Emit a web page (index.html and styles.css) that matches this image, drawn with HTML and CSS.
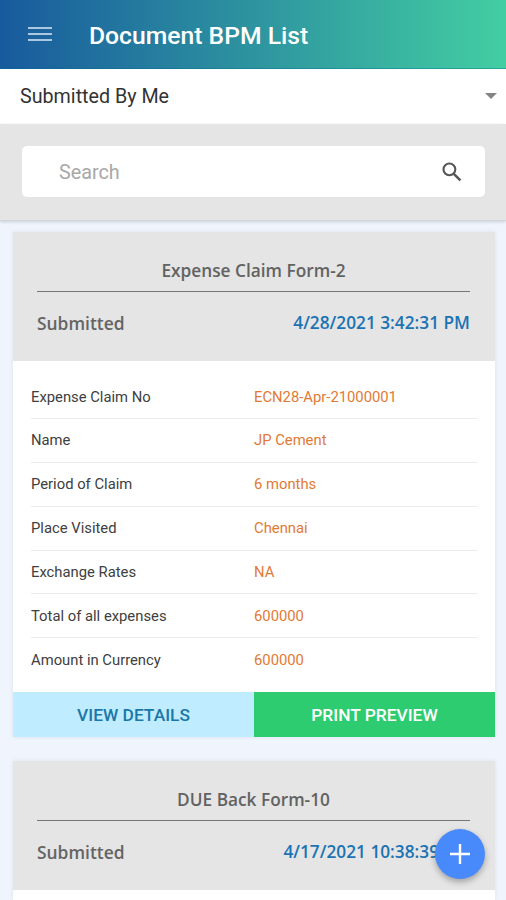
FILE: index.html
```html
<!DOCTYPE html>
<html lang="en">
<head>
<meta charset="utf-8">
<title>Document BPM List</title>
<link rel="stylesheet" href="styles.css">
</head>
<body>
<header class="topbar">
  <svg class="menu" width="24" height="16" viewBox="0 0 24 16"><path d="M0 2h24M0 8h24M0 14h24" stroke="currentColor" stroke-width="2"/></svg>
  <h1 class="title">Document BPM List</h1>
</header>
<div class="filter">
  <span class="filter-text">Submitted By Me</span>
  <svg class="caret" width="12" height="6" viewBox="0 0 12 6"><path d="M0 0h12L6 6z" fill="#858585"/></svg>
</div>
<div class="search-area">
  <div class="search">
    <span class="placeholder">Search</span>
    <svg width="20" height="20" viewBox="0 0 20 20" fill="none" stroke="#555"><circle cx="7.4" cy="7.4" r="5.9" stroke-width="2.1"/><path d="M11.8 11.8l6.6 6.6" stroke-width="2.5"/></svg>
  </div>
</div>
<main class="list">
  <section class="card">
    <div class="card-head">
      <h2 class="form-name">Expense Claim Form-2</h2>
      <div class="status"><span class="state">Submitted</span><span class="date">4/28/2021 3:42:31 PM</span></div>
    </div>
    <div class="rows">
      <div class="row"><span class="label">Expense Claim No</span><span class="value">ECN28-Apr-21000001</span></div>
      <div class="row"><span class="label">Name</span><span class="value">JP Cement</span></div>
      <div class="row"><span class="label">Period of Claim</span><span class="value">6 months</span></div>
      <div class="row"><span class="label">Place Visited</span><span class="value">Chennai</span></div>
      <div class="row"><span class="label">Exchange Rates</span><span class="value">NA</span></div>
      <div class="row"><span class="label">Total of all expenses</span><span class="value">600000</span></div>
      <div class="row"><span class="label">Amount in Currency</span><span class="value">600000</span></div>
    </div>
    <div class="actions"><div class="btn view">VIEW DETAILS</div><div class="btn print">PRINT PREVIEW</div></div>
  </section>
  <section class="card">
    <div class="card-head">
      <h2 class="form-name">DUE Back Form-10</h2>
      <div class="status"><span class="state">Submitted</span><span class="date">4/17/2021 10:38:39 PM</span></div>
    </div>
    <div class="rows-start"></div>
  </section>
</main>
<div class="fab"><svg width="20" height="20" viewBox="0 0 20 20"><path d="M10 0v20M0 10h20" stroke="#fff" stroke-width="2.4"/></svg></div>
</body>
</html>
```
FILE: styles.css
```css
* { box-sizing: border-box; }
body {
  margin: 0;
  height: 900px;
  overflow: hidden;
  background: #f0f4fd;
  font-family: Roboto, sans-serif;
}
.topbar {
  height: 69px;
  display: flex;
  align-items: center;
  padding: 3px 0 0 28px;
  background: linear-gradient(90deg, #185a9d, #43cea2);
  border-bottom: 1px solid rgba(0, 110, 140, .4);
}
.menu { color: #abc8e2; margin-top: -3px; }
.title {
  margin: 1px 0 0 37px;
  font-size: 24.7px;
  font-weight: 500;
  line-height: 32px;
  color: #fff;
}
.filter {
  height: 55px;
  display: flex;
  align-items: center;
  justify-content: space-between;
  padding: 0 9px 0 20px;
  background: #fff;
  font-size: 19.7px;
  color: #333;
}
.caret { margin-top: -2px; }
.search-area {
  height: 97px;
  padding: 22px 21px 0 22px;
  background: #e5e5e5;
  border-bottom: 1px solid #d2d5da;
  box-shadow: 0 1px 3px rgba(0, 0, 0, .16);
}
.search {
  height: 51px;
  display: flex;
  align-items: center;
  justify-content: space-between;
  padding: 0 23px 0 37px;
  background: #fff;
  border-radius: 5px;
  font-size: 19.8px;
  color: #a8a8a8;
}
.placeholder { padding-top: 2px; }
.list {
  display: flex;
  flex-direction: column;
  gap: 24px;
  padding: 11px 11px 0 13px;
}
.card { background: #fff; box-shadow: 0 0 4px rgba(90, 100, 130, .12); }
.card-head {
  height: 129px;
  padding: 18px 25px 0 24px;
  background: #e5e5e5;
  font-family: "Open Sans", "Noto Sans", sans-serif;
  font-weight: 550;
  font-size: 17.25px;
}
.form-name {
  margin: 0;
  height: 42px;
  padding-top: 1px;
  line-height: 40px;
  border-bottom: 1px solid #777;
  text-align: center;
  font-size: inherit;
  font-weight: inherit;
  color: #626262;
}
.status {
  display: flex;
  justify-content: space-between;
  line-height: 62px;
  color: #646464;
}
.state { font-size: 17.4px; }
.date { color: #1b73b4; }
.rows { height: 331px; padding: 14px 18px 0 18px; }
.rows-start { height: 10px; }
.row {
  height: 43.9px;
  display: grid;
  grid-template-columns: 223px 1fr;
  align-items: center;
  border-bottom: 1px solid #ebebeb;
  font-size: 14.8px;
  color: #404040;
}
.row:first-child { padding-top: 1px; }
.row:last-child { border-bottom: 0; }
.value { color: #e27a35; }
.actions { display: flex; height: 45px; }
.btn {
  flex: 1;
  line-height: 46px;
  text-align: center;
  font-size: 17.35px;
  font-weight: 500;
}
.view { background: #bfecff; color: #1a78a9; }
.print { background: #2ecc71; color: #fff; }
.fab {
  position: absolute;
  left: 435px;
  top: 829px;
  width: 50px;
  height: 50px;
  border-radius: 50%;
  display: flex;
  align-items: center;
  justify-content: center;
  background: #4889fc;
  box-shadow: 0 3px 6px rgba(0, 0, 0, .3);
}
```
